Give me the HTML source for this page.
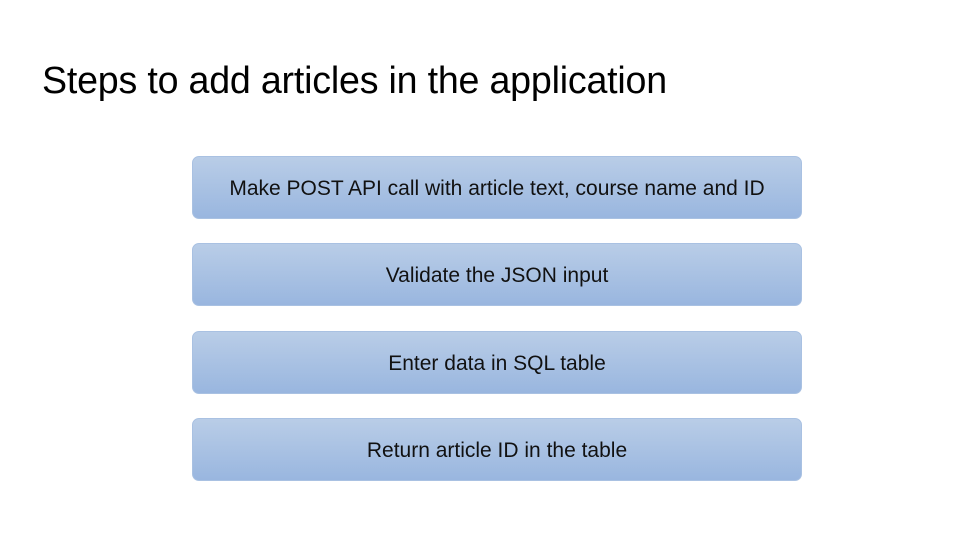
<!DOCTYPE html>
<html><head><style>
body{margin:0;width:960px;height:540px;background:#fff;position:relative;overflow:hidden;font-family:"Liberation Sans",sans-serif}
h1{position:absolute;left:42px;top:59px;margin:0;font-weight:normal;font-size:37.6px;color:#000;letter-spacing:-0.2px;white-space:nowrap}
.b{position:absolute;left:192px;width:610px;height:63px;border-radius:7px;background:linear-gradient(#b9cde7,#99b6df);border:1px solid #a9c1e2;box-sizing:border-box;display:flex;align-items:center;justify-content:center;font-size:21px;color:#111;padding-top:2px}
</style></head><body>
<h1>Steps to add articles in the application</h1>
<div class="b" style="top:156px">Make POST API call with article text, course name and ID</div>
<div class="b" style="top:243px">Validate the JSON input</div>
<div class="b" style="top:331px">Enter data in SQL table</div>
<div class="b" style="top:418px">Return article ID in the table</div>
</body></html>
